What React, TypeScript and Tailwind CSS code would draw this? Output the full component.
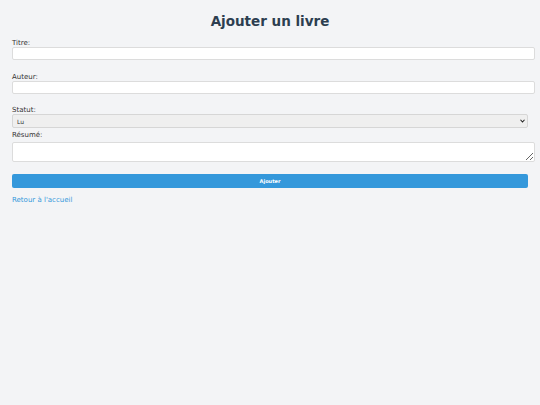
import { useState } from 'react';

export default function App() {
  const [statut, setStatut] = useState('Lu');

  return (
    <div className="min-h-screen bg-[#f3f4f6] px-3 pt-[13px] text-[#333] font-['DejaVu_Sans',Verdana,sans-serif]">
      <h1 className="text-center text-[13.5px] leading-[16px] font-bold text-[#2c3e50] mb-[10px]">
        Ajouter un livre
      </h1>

      <form onSubmit={e => e.preventDefault()}>
        <label className="block text-[7px] leading-[8px]">Titre:</label>
        <input
          type="text"
          className="block w-[calc(100%+7px)] h-[13px] mb-[13px] bg-white border border-[#dcdcdc] rounded-[2px] px-1 text-[7px]"
        />

        <label className="block text-[7px] leading-[8px]">Auteur:</label>
        <input
          type="text"
          className="block w-[calc(100%+7px)] h-[13px] mb-[12px] bg-white border border-[#dcdcdc] rounded-[2px] px-1 text-[7px]"
        />

        <label className="block text-[7px] leading-[8px]">Statut:</label>
        <div className="relative mb-[3px]">
          <select
            value={statut}
            onChange={e => setStatut(e.target.value)}
            className="block w-full h-[14px] appearance-none bg-[#efefef] border border-[#d6d6d6] rounded-[2px] pl-[4px] text-[6px] text-[#333]"
          >
            <option value="Lu">Lu</option>
            <option value="A lire">À lire</option>
            <option value="En cours">En cours</option>
          </select>
          {/* petite flèche du select */}
          <svg
            className="absolute right-[3px] top-[5px] w-[5px] h-[4px] pointer-events-none"
            viewBox="0 0 10 8"
          >
            <path d="M1 1.5 L5 6 L9 1.5" fill="none" stroke="#222" strokeWidth="2.2" />
          </svg>
        </div>

        <label className="block text-[7px] leading-[8px]">Résumé:</label>
        <textarea className="block w-[calc(100%+7px)] h-[20px] mt-[3px] mb-[12px] bg-white border border-[#dcdcdc] rounded-[2px] px-1 text-[7px]" />

        <button
          type="submit"
          className="block w-full h-[14px] bg-[#3498db] rounded-[2px] text-white text-[5px] font-bold leading-[14px]"
        >
          Ajouter
        </button>
      </form>

      <a href="#" className="block w-fit mt-[8px] text-[7px] leading-[8px] text-[#3498db]">
        Retour à l'accueil
      </a>
    </div>
  );
}
